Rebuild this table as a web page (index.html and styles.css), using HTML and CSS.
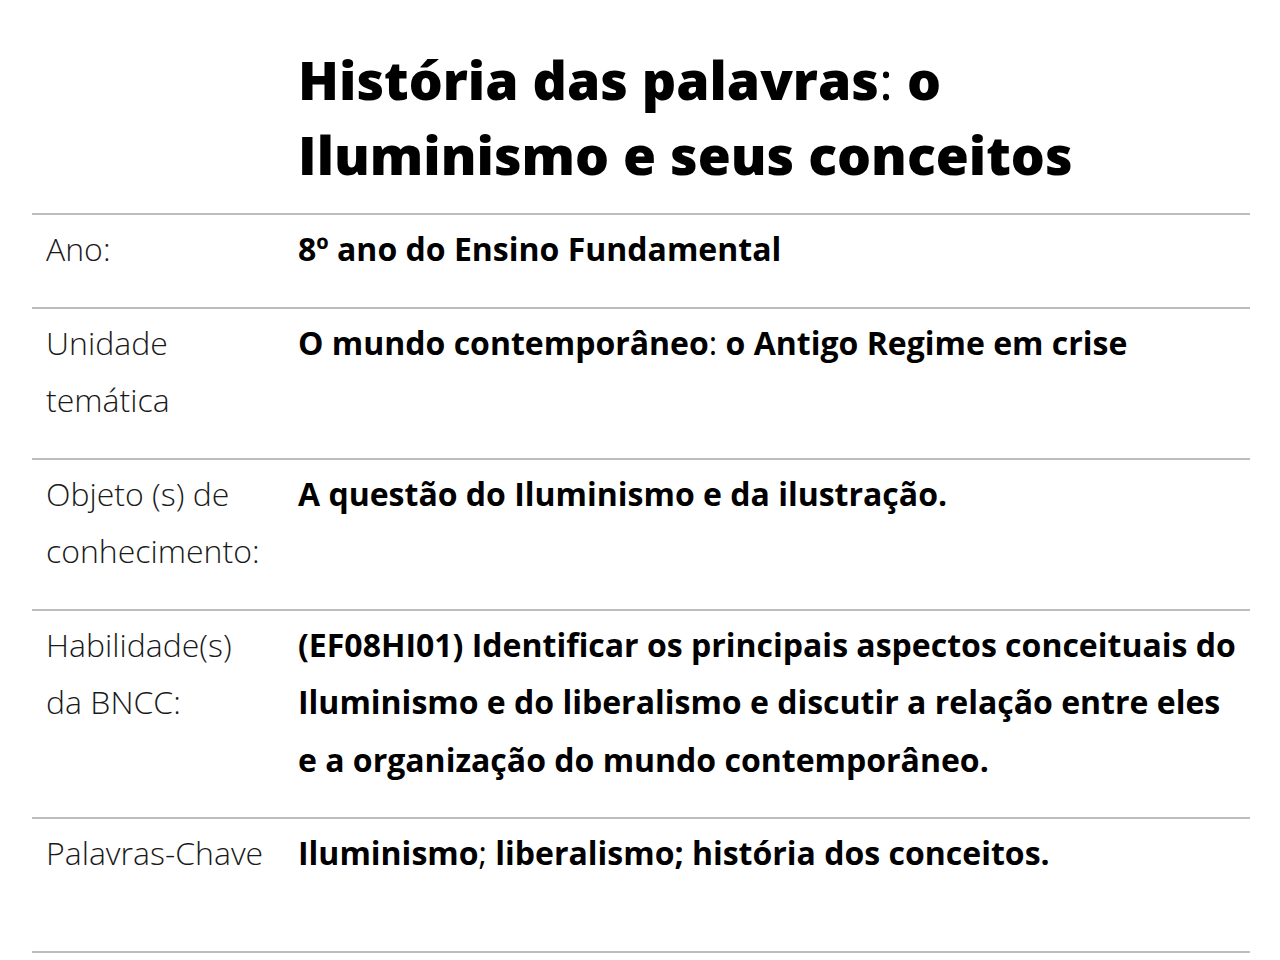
FILE: index.html
```html
<!DOCTYPE html>
<html lang="pt-BR">
<head>
<meta charset="utf-8">
<title>História das palavras: o Iluminismo e seus conceitos</title>
<link rel="stylesheet" href="styles.css">
</head>
<body>
<main class="sheet">
  <h1 class="title">História das palavras<span class="n">:</span> o Iluminismo e seus conceitos</h1>
  <div class="table">
    <div class="row">
      <div class="label">Ano:</div>
      <div class="value">8º ano do Ensino Fundamental</div>
    </div>
    <div class="row">
      <div class="label">Unidade temática</div>
      <div class="value">O mundo contemporâneo<span class="n">:</span> o Antigo Regime em crise</div>
    </div>
    <div class="row">
      <div class="label">Objeto (s) de conhecimento:</div>
      <div class="value">A questão do Iluminismo e da ilustração.</div>
    </div>
    <div class="row">
      <div class="label">Habilidade(s) da BNCC:</div>
      <div class="value">(EF08HI01) Identificar os principais aspectos conceituais do Iluminismo e do liberalismo e discutir a relação entre eles e a organização do mundo contemporâneo.</div>
    </div>
    <div class="row row-last">
      <div class="label">Palavras-Chave</div>
      <div class="value">Iluminismo<span class="n">;</span> liberalismo; história dos conceitos.</div>
    </div>
  </div>
</main>
</body>
</html>
```

FILE: styles.css
```css
html, body {
  margin: 0;
  padding: 0;
  background: #ffffff;
}

body {
  font-family: "Open Sans", "Noto Sans", sans-serif;
  color: #000000;
}

.sheet {
  width: 1218px;
  margin-left: 32px;
  padding-top: 42px;
}

.title {
  margin: 0 0 21px 0;
  padding-left: 266px;
  width: 820px;
  font-size: 53.5px;
  line-height: 75px;
  font-weight: 800;
}

.title .n {
  font-weight: 400;
}

.table {
  border-top: 2px solid #bdbdbd;
}

.row {
  display: grid;
  grid-template-columns: 266px 1fr;
  padding: 5px 0 29px 0;
  border-bottom: 2px solid #bdbdbd;
}

.row-last {
  padding-bottom: 69px;
}

.label {
  padding-left: 14px;
  padding-right: 30px;
  font-size: 32px;
  line-height: 57.5px;
  font-weight: 300;
  color: #1a1a1a;
}

.value {
  font-size: 32px;
  line-height: 57.5px;
  font-weight: 700;
  padding-right: 12px;
}

.value .n {
  font-weight: 400;
}
```
